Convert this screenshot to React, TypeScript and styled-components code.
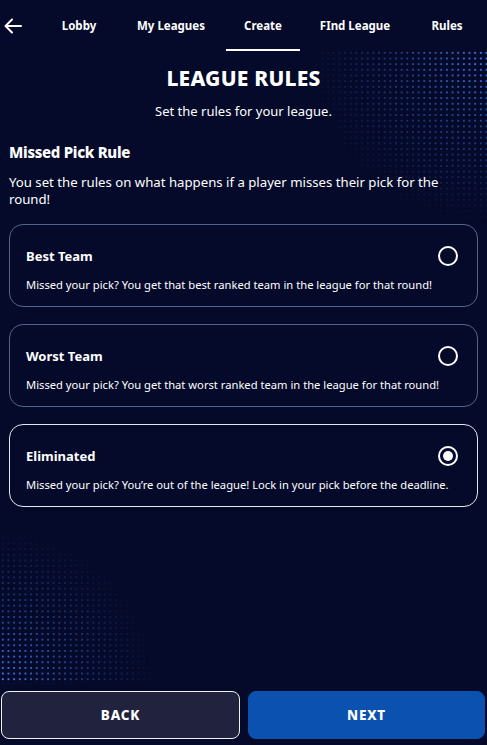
import React, { useState } from "react";
import styled, { createGlobalStyle } from "styled-components";

const Global = createGlobalStyle`
  html, body { margin: 0; padding: 0; background: #050a2a; }
  body { font-family: "Noto Sans", "Open Sans", sans-serif; color: #fff; }
  * { box-sizing: border-box; }
`;

const Page = styled.div`
  position: relative;
  width: 487px;
  height: 745px;
  overflow: hidden;
  background: #050a2a;
  display: flex;
  flex-direction: column;
`;

const Dots = styled.div<{ $corner: "tr" | "bl" }>`
  position: absolute;
  pointer-events: none;
  background-image: radial-gradient(circle, #3f7cf0 0.9px, transparent 1.5px);
  background-size: 5.67px 5.67px;
  ${(p) =>
    p.$corner === "tr"
      ? `top: 50px; right: 0; width: 190px; height: 185px;
         -webkit-mask-image: radial-gradient(ellipse 100% 100% at 100% 0%, #000 0%, rgba(0,0,0,0.45) 45%, transparent 95%);
         mask-image: radial-gradient(ellipse 100% 100% at 100% 0%, #000 0%, rgba(0,0,0,0.45) 45%, transparent 95%);`
      : `top: 518px; left: 0; width: 165px; height: 166px;
         -webkit-mask-image: radial-gradient(ellipse 100% 100% at 0% 100%, #000 0%, rgba(0,0,0,0.45) 45%, transparent 95%);
         mask-image: radial-gradient(ellipse 100% 100% at 0% 100%, #000 0%, rgba(0,0,0,0.45) 45%, transparent 95%);`}
`;

const Nav = styled.nav`
  position: relative;
  z-index: 1;
  display: flex;
  align-items: stretch;
  height: 52px;
`;

const BackArrow = styled.button`
  flex: 0 0 33px;
  background: none;
  border: none;
  padding: 0 0 0 4px;
  display: flex;
  align-items: center;
  color: #fff;
  cursor: pointer;
`;

const Tabs = styled.div`
  display: grid;
  grid-template-columns: repeat(5, 92px);
`;

const Tab = styled.div<{ $active?: boolean }>`
  position: relative;
  display: flex;
  align-items: center;
  justify-content: center;
  font-size: 11.5px;
  font-weight: 700;
  color: #fff;
  padding-bottom: 1px;
  &::after {
    content: "";
    display: ${(p) => (p.$active ? "block" : "none")};
    position: absolute;
    left: 50%;
    transform: translateX(-50%);
    bottom: 1px;
    width: 74px;
    height: 2px;
    background: #fff;
  }
`;

const Content = styled.main`
  position: relative;
  z-index: 1;
  padding: 13px 9px 0 9px;
  display: flex;
  flex-direction: column;
`;

const Title = styled.h1`
  margin: 0;
  text-align: center;
  font-size: 21px;
  font-weight: 800;
  letter-spacing: 0.2px;
  line-height: 26px;
`;

const Subtitle = styled.p`
  margin: 11px 0 0;
  text-align: center;
  font-size: 13px;
  line-height: 18px;
`;

const SectionTitle = styled.h2`
  margin: 22px 0 0;
  font-size: 15px;
  font-weight: 800;
  letter-spacing: -0.3px;
  line-height: 20px;
`;

const SectionText = styled.p`
  margin: 12px 0 0;
  font-size: 13.2px;
  line-height: 17px;
`;

const Options = styled.div`
  margin-top: 16px;
  display: flex;
  flex-direction: column;
  gap: 17px;
`;

const Card = styled.label<{ $selected?: boolean }>`
  display: flex;
  flex-direction: column;
  height: 83px;
  padding: 20px 16px 0 16px;
  border-radius: 14px;
  border: 1px solid ${(p) => (p.$selected ? "#e6e8f0" : "#55648f")};
  cursor: pointer;
`;

const CardHead = styled.div`
  display: flex;
  align-items: center;
  justify-content: space-between;
  height: 22px;
`;

const CardTitle = styled.span`
  font-size: 13px;
  font-weight: 700;
`;

const Radio = styled.span<{ $selected?: boolean }>`
  width: 20px;
  height: 20px;
  margin-right: 3px;
  border-radius: 50%;
  border: 2px solid #fff;
  display: flex;
  align-items: center;
  justify-content: center;
  &::after {
    content: "";
    display: ${(p) => (p.$selected ? "block" : "none")};
    width: 10px;
    height: 10px;
    border-radius: 50%;
    background: #fff;
  }
`;

const CardText = styled.span`
  margin-top: 11px;
  font-size: 11.2px;
  line-height: 14px;
  white-space: nowrap;
`;

const Footer = styled.footer`
  position: relative;
  z-index: 1;
  margin-top: auto;
  padding: 0 2px 6px 1px;
  display: grid;
  grid-template-columns: 239px 237px;
  gap: 8px;
`;

const Button = styled.button<{ $primary?: boolean }>`
  height: 48px;
  border-radius: 8px;
  border: 1px solid ${(p) => (p.$primary ? "#0b52b0" : "#f0f0f5")};
  background: ${(p) => (p.$primary ? "#0b52b0" : "#20223e")};
  color: #fff;
  font-family: "Noto Sans", "Open Sans", sans-serif;
  font-size: 13.5px;
  font-weight: 800;
  letter-spacing: 0.8px;
  cursor: pointer;
`;

const options = [
  { id: "best", title: "Best Team", text: "Missed your pick? You get that best ranked team in the league for that round!" },
  { id: "worst", title: "Worst Team", text: "Missed your pick? You get that worst ranked team in the league for that round!" },
  { id: "elim", title: "Eliminated", text: "Missed your pick? You\u2019re out of the league! Lock in your pick before the deadline." },
];

export default function App() {
  const [sel, setSel] = useState("elim");
  return (
    <>
      <Global />
      <Page>
        <Dots $corner="tr" />
        <Dots $corner="bl" />
        <Nav>
          <BackArrow aria-label="Back">
            <svg width="18" height="16" viewBox="0 0 18 16" fill="none" stroke="#fff" strokeWidth="2" strokeLinecap="round" strokeLinejoin="round">
              <path d="M17 8H2" />
              <path d="M8 1.5L1.5 8L8 14.5" />
            </svg>
          </BackArrow>
          <Tabs>
            <Tab>Lobby</Tab>
            <Tab>My Leagues</Tab>
            <Tab $active>Create</Tab>
            <Tab>FInd League</Tab>
            <Tab>Rules</Tab>
          </Tabs>
        </Nav>
        <Content>
          <Title>LEAGUE RULES</Title>
          <Subtitle>Set the rules for your league.</Subtitle>
          <SectionTitle>Missed Pick Rule</SectionTitle>
          <SectionText>You set the rules on what happens if a player misses their pick for the round!</SectionText>
          <Options>
            {options.map((o) => (
              <Card key={o.id} $selected={sel === o.id} onClick={() => setSel(o.id)}>
                <CardHead>
                  <CardTitle>{o.title}</CardTitle>
                  <Radio $selected={sel === o.id} />
                </CardHead>
                <CardText>{o.text}</CardText>
              </Card>
            ))}
          </Options>
        </Content>
        <Footer>
          <Button>BACK</Button>
          <Button $primary>NEXT</Button>
        </Footer>
      </Page>
    </>
  );
}
